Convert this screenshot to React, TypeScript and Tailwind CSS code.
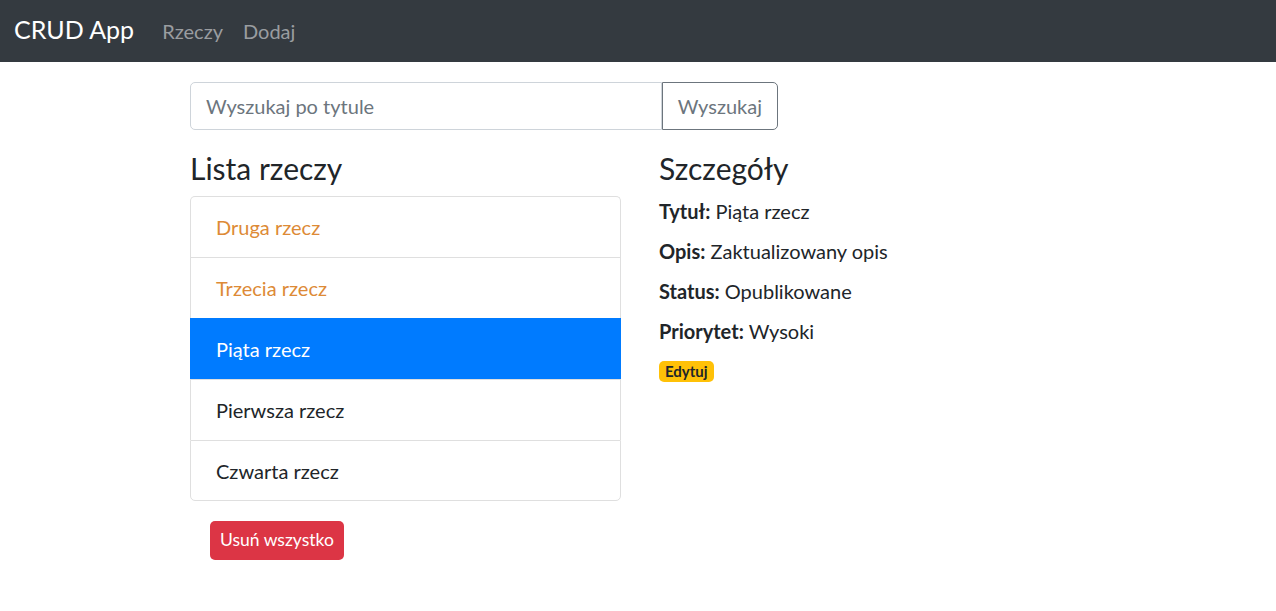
const items = [
  { id: 2, title: 'Druga rzecz', highlight: true },
  { id: 3, title: 'Trzecia rzecz', highlight: true },
  { id: 5, title: 'Piąta rzecz', highlight: false },
  { id: 1, title: 'Pierwsza rzecz', highlight: false },
  { id: 4, title: 'Czwarta rzecz', highlight: false },
];

export default function App() {
  const activeId = 5;

  return (
    <div className="min-h-screen bg-white text-[#212529] font-['Lato','Liberation_Sans',sans-serif]">
      {/* Navbar */}
      <nav className="h-[62px] bg-[#343a40] flex items-center px-[14px]">
        <span className="text-[25px] text-white mr-[28px] -mt-[2px]">CRUD App</span>
        <div className="flex items-center gap-5 text-[20px] text-[#9a9da0]">
          <span>Rzeczy</span>
          <span>Dodaj</span>
        </div>
      </nav>

      <div className="w-[896px] mx-auto pt-5">
        {/* Search */}
        <div className="flex w-[588px] h-[48px] mb-5">
          <input
            type="text"
            placeholder="Wyszukaj po tytule"
            className="flex-1 min-w-0 h-full px-[15px] text-[20px] border border-[#ced4da] rounded-l-[5px] placeholder-[#6c757d] focus:outline-none"
          />
          <button className="h-full px-[15px] text-[20px] text-[#6c757d] border border-[#6c757d] rounded-r-[5px]">
            Wyszukaj
          </button>
        </div>

        <div className="flex gap-[38px]">
          {/* List */}
          <div className="w-[431px]">
            <h4 className="text-[30px] leading-[36px] mb-[10px]">Lista rzeczy</h4>
            <ul>
              {items.map((item, i) => {
                const last = i === items.length - 1;
                const active = item.id === activeId;
                return (
                  <li
                    key={item.id}
                    className={`flex items-center px-[25px] text-[20px] border-x border-t ${
                      last ? 'h-[61px] border-b rounded-b-[5px]' : 'h-[61px]'
                    } ${i === 0 ? 'rounded-t-[5px]' : ''} ${
                      active
                        ? 'bg-[#007bff] text-white border-[#007bff]'
                        : item.highlight
                          ? 'text-[#dd8a36] border-[#dfdfdf]'
                          : 'text-[#212529] border-[#dfdfdf]'
                    }`}
                  >
                    {item.title}
                  </li>
                );
              })}
            </ul>
            <button className="m-5 h-[39px] px-[10px] rounded-[5px] bg-[#dc3545] text-white text-[17.5px]">
              Usuń wszystko
            </button>
          </div>

          {/* Details */}
          <div className="flex-1">
            <h4 className="text-[30px] leading-[36px] mb-[10px]">Szczegóły</h4>
            {[
              ['Tytuł:', 'Piąta rzecz'],
              ['Opis:', 'Zaktualizowany opis'],
              ['Status:', 'Opublikowane'],
              ['Priorytet:', 'Wysoki'],
            ].map(([label, value]) => (
              <div key={label} className="text-[20px] leading-[30px] mb-[10px]">
                <strong className="font-bold">{label}</strong> {value}
              </div>
            ))}
            <div className="leading-[30px]">
              <span className="inline-block px-[6px] py-[3px] rounded-[5px] bg-[#ffc107] text-[15px] leading-[15px] font-bold text-[#212529]">
                Edytuj
              </span>
            </div>
          </div>
        </div>
      </div>
    </div>
  );
}
